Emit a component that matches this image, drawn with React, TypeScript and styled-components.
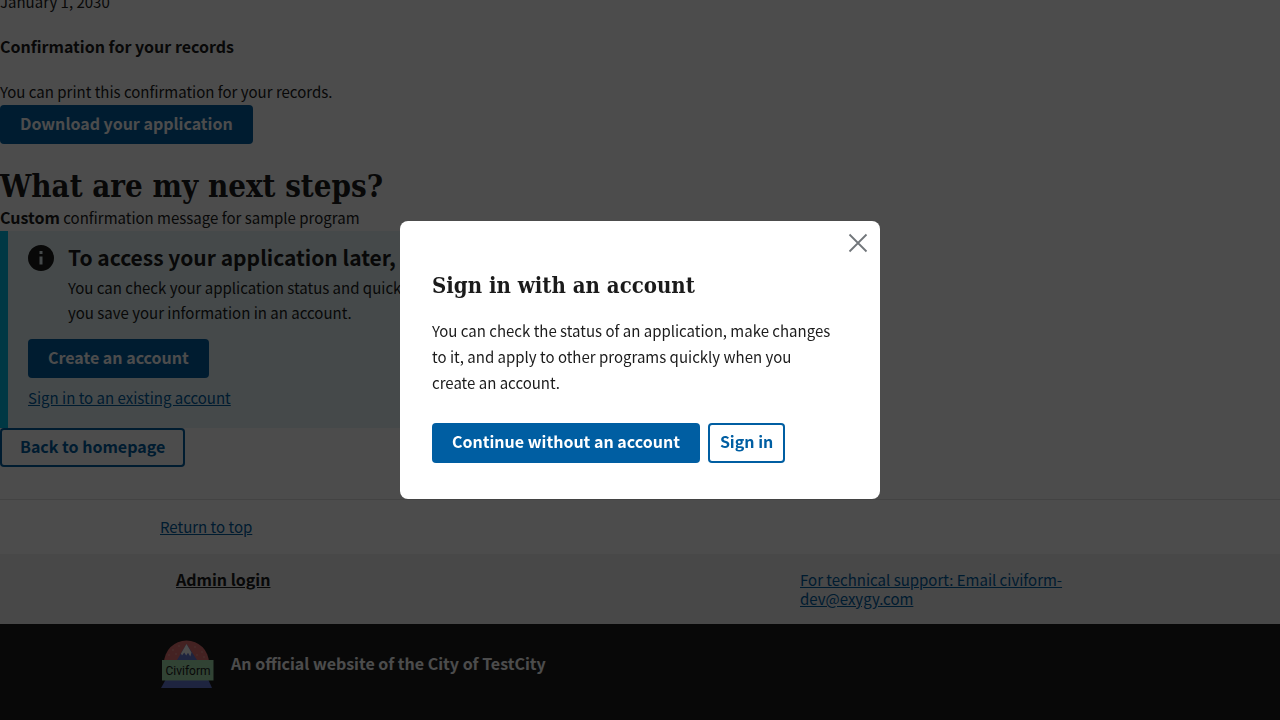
import React from "react";
import styled, { createGlobalStyle, css } from "styled-components";

const sans = `"Noto Sans CJK JP", "Noto Sans", sans-serif`;
const serif = `"DejaVu Serif Condensed", "DejaVu Serif", serif`;

const color = {
  ink: "#1b1b1b",
  primary: "#005ea2",
  info: "#00bde3",
  infoLight: "#e7f6f8",
  line: "#dfe1e2",
  footer: "#f0f0f0",
  close: "#71767a",
};

const GlobalStyle = createGlobalStyle`
  *, *::before, *::after { box-sizing: border-box; }
  body {
    margin: 0;
    overflow: hidden;
    color: ${color.ink};
    font-family: ${sans};
    font-size: 15px;
    line-height: 25px;
  }
  h1, h2, h3, p { margin: 0; }
  strong { font-size: 16px; }
`;

const Page = styled.div`
  display: flex;
  flex-direction: column;
  justify-content: flex-end;
  height: 100vh;
  overflow: hidden;
  background: #fff;
`;

const Main = styled.main`
  display: flex;
  flex: none;
  flex-direction: column;
  align-items: flex-start;
  padding-bottom: 32px;
`;

const Copy = styled.p`
  padding-bottom: 1px;
`;

const SectionLabel = styled.h3`
  margin: 19px 0 20px;
  font-size: 16px;
  font-weight: 700;
`;

const PageHeading = styled.h2`
  margin-top: 24px;
  font-family: ${serif};
  font-size: 31px;
  font-weight: 700;
  line-height: 37px;
`;

const Button = styled.button<{ $outline?: boolean; $tight?: boolean }>`
  min-height: 39px;
  padding: 0 ${(p) => (p.$tight ? 12 : 20)}px 4px;
  border: 0;
  border-radius: 4px;
  background: ${color.primary};
  color: #fff;
  font-family: ${sans};
  font-size: 16px;
  font-weight: 700;
  line-height: 16px;
  white-space: nowrap;
  cursor: pointer;
  ${(p) =>
    p.$outline &&
    css`
      background: transparent;
      box-shadow: inset 0 0 0 2px ${color.primary};
      color: ${color.primary};
    `}
`;

const Link = styled.a<{ $strong?: boolean }>`
  color: ${(p) => (p.$strong ? color.ink : color.primary)};
  font-size: ${(p) => (p.$strong ? 16 : 15)}px;
  font-weight: ${(p) => (p.$strong ? 700 : 400)};
  text-decoration: underline;
`;

const Alert = styled.section`
  display: flex;
  flex-direction: column;
  align-items: flex-start;
  gap: 7px;
  width: 100%;
  max-width: 696px;
  padding: 12px 20px 18px;
  border-left: 8px solid ${color.info};
  background: ${color.infoLight};
`;

const AlertBody = styled.div`
  display: flex;
  gap: 14px;
  margin-bottom: 7px;
`;

const AlertIcon = styled.svg`
  flex: none;
  width: 26px;
  height: 30px;
`;

const AlertHeading = styled.h3`
  margin-bottom: 4px;
  font-size: 21px;
  font-weight: 700;
  line-height: 28px;
`;

const Container = styled.div`
  width: 100%;
  max-width: 1024px;
  margin: 0 auto;
  padding: 0 32px;
`;

const ReturnBar = styled.div`
  flex: none;
  padding: 16px 0;
  border-top: 1px solid ${color.line};
  line-height: 22px;
`;

const FooterNav = styled.footer`
  flex: none;
  padding: 16px 0;
  background: ${color.footer};
  line-height: 19px;
`;

const FooterColumns = styled(Container)`
  display: grid;
  grid-template-columns: 2fr 1fr;
`;

const FooterCell = styled.div`
  padding-left: 16px;
`;

const Identifier = styled.section`
  flex: none;
  padding: 16px 0 32px;
  background: ${color.ink};
  color: #fff;
`;

const IdentifierRow = styled(Container)`
  display: flex;
  align-items: center;
  gap: 16px;
  font-size: 16px;
  font-weight: 700;
`;

const IdentifierText = styled.p`
  padding-bottom: 2px;
`;

const Logo = styled.svg`
  flex: none;
  width: 55px;
  height: 48px;
`;

const Overlay = styled.div`
  position: fixed;
  inset: 0;
  display: flex;
  align-items: center;
  justify-content: center;
  background: rgba(0, 0, 0, 0.7);
`;

const Modal = styled.div`
  display: flex;
  flex-direction: column;
  width: 100%;
  max-width: 480px;
  border-radius: 8px;
  background: #fff;
`;

const CloseButton = styled.button`
  display: flex;
  align-self: flex-end;
  margin: 6px 6px 0 0;
  padding: 0;
  border: 0;
  background: transparent;
  color: ${color.close};
  cursor: pointer;
`;

const ModalContent = styled.div`
  padding: 11px 32px 36px;
`;

const ModalHeading = styled.h1`
  margin-bottom: 18px;
  font-family: ${serif};
  font-size: 22px;
  font-weight: 700;
  line-height: 30px;
`;

const ModalCopy = styled.p`
  max-width: 402px;
  line-height: 26px;
`;

const ModalActions = styled.div`
  display: grid;
  grid-auto-flow: column;
  grid-template-rows: 40px;
  justify-content: start;
  gap: 8px;
  margin-top: 27px;
`;

function InfoIcon() {
  return (
    <AlertIcon viewBox="0 0 26 30" aria-hidden="true">
      <path
        fill={color.ink}
        d="M13 2a13 13 0 1 0 0 26a13 13 0 0 0 0-26zm1.500 19.600h-3v-8.200h3zm0-10.600h-3V8h3z"
      />
    </AlertIcon>
  );
}

function CityLogo() {
  return (
    <Logo viewBox="0 0 55 48" role="img" aria-label="Civiform">
      <path d="M4 23a22.500 22.500 0 0 1 45 0z" fill="#e57373" />
      <g fill="#f4b3a8">
        <circle cx="13" cy="10" r="0.7" />
        <circle cx="19" cy="6" r="0.7" />
        <circle cx="9" cy="15" r="0.7" />
        <circle cx="16" cy="14" r="0.7" />
        <circle cx="35" cy="7" r="0.7" />
        <circle cx="42" cy="12" r="0.7" />
        <circle cx="37" cy="15" r="0.7" />
        <circle cx="44" cy="17" r="0.7" />
      </g>
      <path d="M17 20l9.500-16L37 20z" fill="#6478d3" />
      <path d="M26.500 4l5 8.500-1.200 4-2.300-3.800-1.800 2.800-2-3-2.200 3-1-2z" fill="#fff" />
      <path d="M6 39h42l4 9H1z" fill="#6478d3" />
      <path d="M2 20h51.500v20.500H2z" fill="#a5dfb0" />
      <text
        x="28"
        y="35"
        textAnchor="middle"
        fontFamily="Roboto, sans-serif"
        fontSize="12"
        fontWeight="400"
        fill="#1b1b1b"
      >
        Civiform
      </text>
    </Logo>
  );
}

export default function App() {
  return (
    <>
      <GlobalStyle />
      <Page>
        <Main>
          <Copy>January 1, 2030</Copy>
          <SectionLabel>Confirmation for your records</SectionLabel>
          <Copy>You can print this confirmation for your records.</Copy>
          <Button type="button">Download your application</Button>
          <PageHeading>What are my next steps?</PageHeading>
          <Copy>
            <strong>Custom</strong> confirmation message for sample program
          </Copy>
          <Alert>
            <AlertBody>
              <InfoIcon />
              <div>
                <AlertHeading>To access your application later, create an account</AlertHeading>
                <p>
                  You can check your application status and quickly apply to additional programs when you save your
                  information in an account.
                </p>
              </div>
            </AlertBody>
            <Button type="button">Create an account</Button>
            <Link href="#sign-in">Sign in to an existing account</Link>
          </Alert>
          <Button type="button" $outline>
            Back to homepage
          </Button>
        </Main>
        <ReturnBar>
          <Container>
            <Link href="#top">Return to top</Link>
          </Container>
        </ReturnBar>
        <FooterNav>
          <FooterColumns>
            <FooterCell>
              <Link href="#admin" $strong>
                Admin login
              </Link>
            </FooterCell>
            <Link href="mailto:civiform-dev@exygy.com">For technical support: Email civiform-dev@exygy.com</Link>
          </FooterColumns>
        </FooterNav>
        <Identifier>
          <IdentifierRow>
            <CityLogo />
            <IdentifierText>An official website of the City of TestCity</IdentifierText>
          </IdentifierRow>
        </Identifier>
      </Page>
      <Overlay>
        <Modal role="dialog" aria-modal="true" aria-labelledby="modal-heading">
          <CloseButton type="button" aria-label="Close this window">
            <svg width="32" height="32" viewBox="0 0 32 32" fill="none" stroke="currentColor" aria-hidden="true">
              <path strokeWidth="1.800" d="M7.500 7.500l17 17M24.500 7.500l-17 17" />
            </svg>
          </CloseButton>
          <ModalContent>
            <ModalHeading id="modal-heading">Sign in with an account</ModalHeading>
            <ModalCopy>
              You can check the status of an application, make changes to it, and apply to other programs quickly when
              you create an account.
            </ModalCopy>
            <ModalActions>
              <Button type="button">Continue without an account</Button>
              <Button type="button" $outline $tight>
                Sign in
              </Button>
            </ModalActions>
          </ModalContent>
        </Modal>
      </Overlay>
    </>
  );
}
